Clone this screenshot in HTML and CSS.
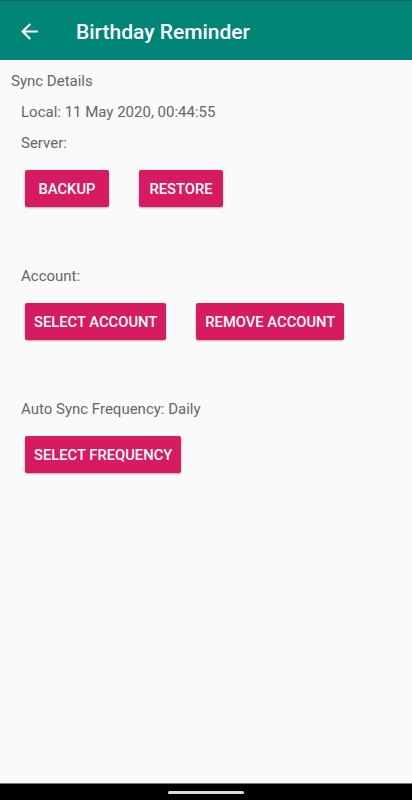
FILE: index.html
```html
<!DOCTYPE html>
<html lang="en">
<head>
<meta charset="UTF-8" />
<meta name="viewport" content="width=device-width, initial-scale=1.0" />
<title>Birthday Reminder</title>
<link rel="stylesheet" href="styles.css">
</head>
<body>
  <header class="app-bar">
    <svg class="back" viewBox="0 0 24 24" width="25" height="25"><path fill="#fff" d="M20 11H7.83l5.59-5.59L12 4l-8 8 8 8 1.41-1.41L7.83 13H20v-2z"/></svg>
    <h1 class="app-title">Birthday Reminder</h1>
  </header>

  <main class="content">
    <div class="heading">Sync Details</div>
    <div class="label first">Local: 11 May 2020, 00:44:55</div>
    <div class="label">Server:</div>
    <div class="buttons">
      <button class="btn">Backup</button>
      <button class="btn">Restore</button>
    </div>

    <div class="label section">Account:</div>
    <div class="buttons">
      <button class="btn">Select Account</button>
      <button class="btn">Remove Account</button>
    </div>

    <div class="label section">Auto Sync Frequency: Daily</div>
    <div class="buttons">
      <button class="btn">Select Frequency</button>
    </div>
  </main>

  <footer class="nav-bar"><span class="handle"></span></footer>
</body>
</html>
```

FILE: styles.css
```css
html,body{height:100%;}
body{margin:0;background:#fafafa;font-family:Roboto,"Liberation Sans",Arial,sans-serif;display:flex;flex-direction:column;}
.app-bar{height:59px;background:#008577;border-top:1px solid #00665b;display:flex;align-items:center;flex-shrink:0;}
.back{margin-left:17px;margin-top:2px;}
.app-title{margin:2px 0 0 34px;font-size:21px;font-weight:500;color:#fff;}
.content{flex:1;padding-top:11px;}
.heading{margin-left:11px;font-size:15px;line-height:20px;color:#666;}
.label{margin-left:21px;margin-top:11px;font-size:15px;line-height:20px;color:#666;}
.label.section{margin-top:59px;}
.buttons{display:flex;gap:30px;margin:17px 0 0 25px;}
.btn{min-width:84px;height:37px;padding:0 9px;border:none;border-radius:2px;background:#d81b60;color:#fff;font-family:Roboto,"Liberation Sans",Arial,sans-serif;font-size:14.75px;font-weight:500;text-transform:uppercase;box-shadow:0 1px 2px rgba(0,0,0,.3);}
.nav-bar{height:16px;background:#000;border-top:1px solid #777;display:flex;justify-content:center;align-items:center;flex-shrink:0;}
.handle{width:76px;height:3px;border-radius:2px;background:#ddd;}
```
